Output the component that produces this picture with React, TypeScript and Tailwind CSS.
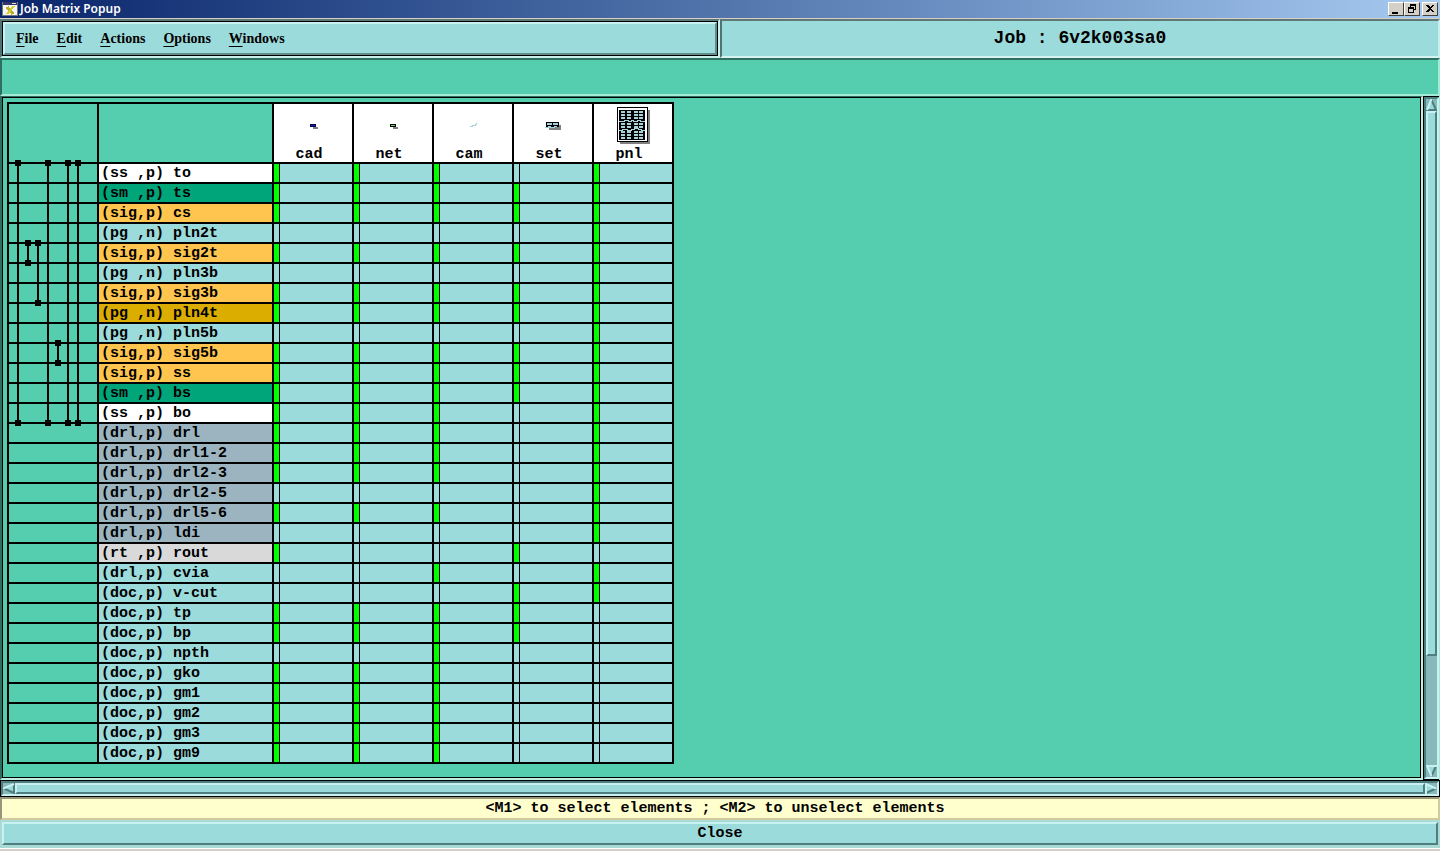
import { useState } from "react";

interface Layer {
  context: string;
  name: string;
  color: string;
  // one flag per step: cad, net, cam, set, pnl
  filled: string;
}

interface Drill {
  slot: number;
  from: number;
  to: number;
}

const steps = ["cad", "net", "cam", "set", "pnl"];

const menus = ["File", "Edit", "Actions", "Options", "Windows"];

const WHITE = "bg-white";
const MASK = "bg-[#00a67a]";
const SIGNAL = "bg-[#ffc54e]";
const PLANE = "bg-[#dbad00]";
const DRILL = "bg-[#9bb4bf]";
const ROUT = "bg-[#d9d9d9]";
const PLAIN = "bg-[#9cdbdb]";

const layers: Layer[] = [
  { context: "(ss ,p)", name: "to", color: WHITE, filled: "11101" },
  { context: "(sm ,p)", name: "ts", color: MASK, filled: "11111" },
  { context: "(sig,p)", name: "cs", color: SIGNAL, filled: "11111" },
  { context: "(pg ,n)", name: "pln2t", color: PLAIN, filled: "00001" },
  { context: "(sig,p)", name: "sig2t", color: SIGNAL, filled: "11111" },
  { context: "(pg ,n)", name: "pln3b", color: PLAIN, filled: "00001" },
  { context: "(sig,p)", name: "sig3b", color: SIGNAL, filled: "11111" },
  { context: "(pg ,n)", name: "pln4t", color: PLANE, filled: "11111" },
  { context: "(pg ,n)", name: "pln5b", color: PLAIN, filled: "00001" },
  { context: "(sig,p)", name: "sig5b", color: SIGNAL, filled: "11111" },
  { context: "(sig,p)", name: "ss", color: SIGNAL, filled: "11111" },
  { context: "(sm ,p)", name: "bs", color: MASK, filled: "11111" },
  { context: "(ss ,p)", name: "bo", color: WHITE, filled: "11101" },
  { context: "(drl,p)", name: "drl", color: DRILL, filled: "11101" },
  { context: "(drl,p)", name: "drl1-2", color: DRILL, filled: "11101" },
  { context: "(drl,p)", name: "drl2-3", color: DRILL, filled: "11101" },
  { context: "(drl,p)", name: "drl2-5", color: DRILL, filled: "00001" },
  { context: "(drl,p)", name: "drl5-6", color: DRILL, filled: "11101" },
  { context: "(drl,p)", name: "ldi", color: DRILL, filled: "00001" },
  { context: "(rt ,p)", name: "rout", color: ROUT, filled: "10010" },
  { context: "(drl,p)", name: "cvia", color: PLAIN, filled: "00101" },
  { context: "(doc,p)", name: "v-cut", color: PLAIN, filled: "00011" },
  { context: "(doc,p)", name: "tp", color: PLAIN, filled: "11110" },
  { context: "(doc,p)", name: "bp", color: PLAIN, filled: "11110" },
  { context: "(doc,p)", name: "npth", color: PLAIN, filled: "00100" },
  { context: "(doc,p)", name: "gko", color: PLAIN, filled: "11100" },
  { context: "(doc,p)", name: "gm1", color: PLAIN, filled: "11100" },
  { context: "(doc,p)", name: "gm2", color: PLAIN, filled: "11100" },
  { context: "(doc,p)", name: "gm3", color: PLAIN, filled: "11100" },
  { context: "(doc,p)", name: "gm9", color: PLAIN, filled: "11100" },
];

const drills: Drill[] = [
  { slot: 0, from: 0, to: 13 },
  { slot: 1, from: 4, to: 5 },
  { slot: 2, from: 4, to: 7 },
  { slot: 3, from: 0, to: 13 },
  { slot: 4, from: 9, to: 10 },
  { slot: 5, from: 0, to: 13 },
  { slot: 6, from: 0, to: 13 },
];

// Drill spans, drawn over the first matrix column
function DrillSpans() {
  return (
    <svg className="pointer-events-none absolute left-0 top-0" width="90" height="330" shapeRendering="crispEdges">
      {drills.map((drill) => {
        const x = 10 + drill.slot * 10;
        const top = 60 + drill.from * 20;
        const bottom = 60 + drill.to * 20;
        return (
          <g key={drill.slot}>
            <rect x={x} y={top} width="2" height={bottom - top} />
            <rect x={x - 2} y={top - 2} width="6" height="6" />
            <rect x={x - 2} y={bottom - 2} width="6" height="6" />
          </g>
        );
      })}
    </svg>
  );
}

function PanelPreview() {
  const columns = [27, 33, 40, 45];
  const rows = [7, 10, 13, 19, 22, 27, 30, 33];
  return (
    <>
      <rect x="26" y="6" width="30" height="34" fill="#808080" />
      <rect x="23" y="3" width="31" height="35" fill="#000" />
      <rect x="24" y="4" width="29" height="33" fill="#fff" />
      <rect x="25" y="6" width="26" height="30" fill="#000" />
      {rows.map((y) =>
        columns.map((x) => <rect key={`${x}-${y}`} x={x} y={y} width="4" height="2" fill="#a6d3dc" />)
      )}
      <path
        d="M25 17h5v-1h4v1h3v-1h2v1h4v-1h3v1h5M25 26h3v-1h5v1h4v-1h3v-1h4v1h3v1h4"
        fill="none"
        stroke="#a6d3dc"
      />
    </>
  );
}

function StepPreview({ step }: { step: string }) {
  return (
    <svg className="block" width="78" height="44" shapeRendering="crispEdges">
      {(step === "cad" || step === "net") && (
        <>
          <rect x="39" y="23" width="5" height="2" fill="#808080" />
          <rect x="36" y="20" width="6" height="3" fill={step === "cad" ? "#000050" : "#000"} />
          <rect x="37" y="21" width="4" height="1" fill={step === "cad" ? "#1818b0" : "#58e058"} />
        </>
      )}
      {step === "cam" && <path d="M36 22h2v-1h3v-1h1v-1h1v2h-1v1h-3v1h-3z" fill="#a6d3dc" />}
      {step === "set" && (
        <>
          <rect x="35" y="21" width="12" height="5" fill="#808080" />
          <rect x="32" y="18" width="13" height="5" fill="#000" />
          <rect x="33" y="19" width="5" height="2" fill="#a6d3dc" />
          <rect x="39" y="19" width="5" height="2" fill="#a6d3dc" />
          <path d="M31 23h3v-1h3v1h3v-1h3v1h-2v1h-10z" fill="#a6d3dc" />
        </>
      )}
      {step === "pnl" && <PanelPreview />}
    </svg>
  );
}

function Arrow({ direction }: { direction: "up" | "down" | "left" | "right" }) {
  return (
    <button aria-label={`Scroll ${direction}`} className="flex shrink-0 items-center justify-center">
      {direction === "up" && (
        <svg width="11" height="12">
          <path d="M5.5 0L11 12H0z" fill="#9cdbdb" />
          <path d="M5.500 1L10 11H0" fill="none" stroke="#4e7e80" strokeWidth="2" />
          <path d="M5.500 0L1 11" stroke="#c9f1f1" strokeWidth="2" />
        </svg>
      )}
      {direction === "down" && (
        <svg width="11" height="12">
          <path d="M0 0h11L5.5 12z" fill="#9cdbdb" />
          <path d="M10 1L5.5 11" stroke="#4e7e80" strokeWidth="2" />
          <path d="M11 1H1l4.500 10" fill="none" stroke="#c9f1f1" strokeWidth="2" />
        </svg>
      )}
      {direction === "left" && (
        <svg width="12" height="11">
          <path d="M0 5.5L12 0v11z" fill="#9cdbdb" />
          <path d="M1 5.500L11 10V0" fill="none" stroke="#4e7e80" strokeWidth="2" />
          <path d="M0 5.500L11 1" stroke="#c9f1f1" strokeWidth="2" />
        </svg>
      )}
      {direction === "right" && (
        <svg width="12" height="11">
          <path d="M0 0l12 5.500L0 11z" fill="#9cdbdb" />
          <path d="M1 10l10-4.500" stroke="#4e7e80" strokeWidth="2" />
          <path d="M1 11V1l10 4.500" fill="none" stroke="#c9f1f1" strokeWidth="2" />
        </svg>
      )}
    </button>
  );
}

function TitleBar() {
  const button =
    "flex h-[14px] w-4 items-center justify-center border border-b-[#404040] border-l-white border-r-[#404040] border-t-white bg-[#d4d0c8]";
  return (
    <header className="flex h-[19px] shrink-0 items-center border-b border-[#d4d0c8] bg-gradient-to-r from-[#0a246a] to-[#a6caf0] px-0.5">
      <svg width="16" height="16" viewBox="0 0 16 16" shapeRendering="crispEdges">
        <rect x="0" y="1" width="15" height="13" fill="#f4f4f4" stroke="#777" />
        <rect x="1" y="1" width="14" height="3" fill="#34346c" />
        <rect x="10" y="2" width="4" height="1" fill="#ddd" />
        <path d="M5 6l6 7" stroke="#b8b020" strokeWidth="3" />
        <path d="M12 5l-7 8" stroke="#d8d038" strokeWidth="2" />
      </svg>
      <h1 className="ml-0.5 flex-1 font-['Noto_Sans',sans-serif] text-[12px] font-semibold leading-4 text-white">
        Job Matrix Popup
      </h1>
      <div className="flex">
        <button aria-label="Minimize" className={button}>
          <svg width="12" height="10" shapeRendering="crispEdges">
            <rect x="2" y="8" width="6" height="2" />
          </svg>
        </button>
        <button aria-label="Restore" className={button}>
          <svg width="12" height="10" shapeRendering="crispEdges">
            <path d="M4 0h6v6H8V5h1V2H5v1H4zM2 3h6v6H2zM3 5v3h4V5z" fillRule="evenodd" />
          </svg>
        </button>
        <button aria-label="Close window" className={`${button} ml-0.5`}>
          <svg width="12" height="10" shapeRendering="crispEdges">
            <path d="M2 1h2l2 2 2-2h2L7 4.500 10 8H8L6 6 4 8H2l3-3.500z" />
          </svg>
        </button>
      </div>
    </header>
  );
}

function Matrix() {
  const [selected, setSelected] = useState<string | null>(null);

  return (
    <div className="relative w-max">
      <table className="w-[667px] table-fixed border-separate border-spacing-0 border-l-2 border-t-2 border-black text-[15px] font-bold leading-4">
        <colgroup>
          <col className="w-[90px]" />
          <col className="w-[175px]" />
          {steps.map((step) => (
            <col key={step} className="w-20" />
          ))}
        </colgroup>
        <thead>
          <tr className="h-[60px]">
            <td className="border-b-2 border-r-2 border-black p-0" />
            <td className="border-b-2 border-r-2 border-black p-0" />
            {steps.map((step) => (
              <th key={step} scope="col" className="border-b-2 border-r-2 border-black bg-white p-0 align-top">
                <StepPreview step={step} />
                <div className="pr-2 leading-[14px]">{step}</div>
              </th>
            ))}
          </tr>
        </thead>
        <tbody>
          {layers.map((layer) => (
            <tr
              key={layer.name}
              className="h-5"
              aria-selected={selected === layer.name}
              onClick={() => setSelected(layer.name)}
            >
              <td className="border-b-2 border-r-2 border-black p-0" />
              <th
                scope="row"
                className={`whitespace-pre border-b-2 border-r-2 border-black pb-0 pl-0.5 pr-0 pt-0.5 text-left ${layer.color}`}
              >
                {layer.context} {layer.name}
              </th>
              {steps.map((step, index) => (
                <td key={step} className="border-b-2 border-r-2 border-black bg-[#9cdbdb] p-0">
                  <div
                    className={`h-[18px] w-1.5 border-r border-black ${layer.filled[index] === "1" ? "bg-[#00ff00]" : ""}`}
                  />
                </td>
              ))}
            </tr>
          ))}
        </tbody>
      </table>
      <DrillSpans />
    </div>
  );
}

export default function App() {
  return (
    <div className="flex h-screen min-h-[851px] flex-col bg-[#d4d0c8] font-['Liberation_Mono',monospace] text-black">
      <TitleBar />

      {/* Menu bar and job name */}
      <div className="grid h-[39px] shrink-0 grid-cols-2 bg-[#9cdbdb]">
        <div className="border-2 border-b-[#c9f1ec] border-l-[#4d7472] border-r-[#c9f1ec] border-t-[#5f7876]">
          <div className="h-full border border-black">
            <nav className="flex h-full items-center gap-[18px] border-2 border-b-[#5f8c8c] border-l-[#c9f1f1] border-r-[#5f8c8c] border-t-[#c9f1f1] pl-[11px] font-['Liberation_Serif',serif] text-[14px] font-bold leading-5">
              {menus.map((menu) => (
                <button key={menu}>
                  <span className="underline underline-offset-3">{menu[0]}</span>
                  {menu.slice(1)}
                </button>
              ))}
            </nav>
          </div>
        </div>
        <div className="flex items-center justify-center border-2 border-b-[#d5f3f0] border-l-[#4d7472] border-r-[#c9f1ec] border-t-[#5f7876] pb-0.5 text-lg font-bold leading-6">
          Job : 6v2k003sa0
        </div>
      </div>

      <div className="h-[38px] shrink-0 border-2 border-b-[#a5ead6] border-l-[#2f6f62] border-r-[#a5ead6] border-t-[#2f6f62] bg-[#55ceaf]" />

      {/* Matrix with its vertical scrollbar */}
      <div className="flex min-h-0 flex-1 bg-[#a5ead6] pr-px">
        <div className="flex min-w-0 flex-1 border-b-2 border-l-2 border-r-2 border-t border-b-[#bdf0e0] border-l-[#2f6f62] border-r-[#bdf0e0] border-t-[#2f6f62]">
          <main className="min-w-0 flex-1 overflow-hidden border border-black bg-[#55ceaf] pl-1 pt-1">
            <Matrix />
          </main>
        </div>
        <div className="flex w-4 shrink-0 flex-col border-b border-l border-t border-black">
          <div className="flex min-h-0 flex-1 flex-col border-2 border-b-[#c9f1f1] border-l-[#4e7e80] border-r-[#c9f1f1] border-t-[#4e7e80] bg-[#88b9ba]">
            <Arrow direction="up" />
            <div className="flex min-h-0 flex-1 flex-col">
              <div className="h-5/6 border-2 border-b-[#4e7e80] border-l-[#c9f1f1] border-r-[#4e7e80] border-t-[#c9f1f1] bg-[#9cdbdb]" />
            </div>
            <Arrow direction="down" />
          </div>
        </div>
      </div>

      {/* Horizontal scrollbar */}
      <div className="h-[17px] shrink-0 border border-black">
        <div className="flex h-full border-2 border-b-[#c9f1f1] border-l-[#4e7e80] border-r-[#c9f1f1] border-t-[#4e7e80] bg-[#88b9ba]">
          <Arrow direction="left" />
          <div className="flex-1 border-2 border-b-[#4e7e80] border-l-[#c9f1f1] border-r-[#4e7e80] border-t-[#c9f1f1] bg-[#9cdbdb]" />
          <Arrow direction="right" />
        </div>
      </div>

      <p className="h-[23px] shrink-0 whitespace-pre border-2 border-b-[#cfcaa0] border-l-[#99977a] border-r-[#cfcaa0] border-t-[#99977a] bg-[#ffffce] pr-2.5 text-center text-[15px] font-bold leading-5">
        {"<M1> to select elements ; <M2> to unselect elements"}
      </p>

      <footer className="shrink-0 border-b border-white bg-[#a9dad6] px-0.5 pb-[3px] pt-0.5">
        <button className="block h-[23px] w-full border-2 border-b-[#4e7e80] border-l-[#c9f1f1] border-r-[#4e7e80] border-t-[#c9f1f1] bg-[#9cdbdb] text-[15px] font-bold leading-5">
          Close
        </button>
      </footer>
      <div className="h-0.5 shrink-0 bg-[#d4d0c8]" />
    </div>
  );
}
